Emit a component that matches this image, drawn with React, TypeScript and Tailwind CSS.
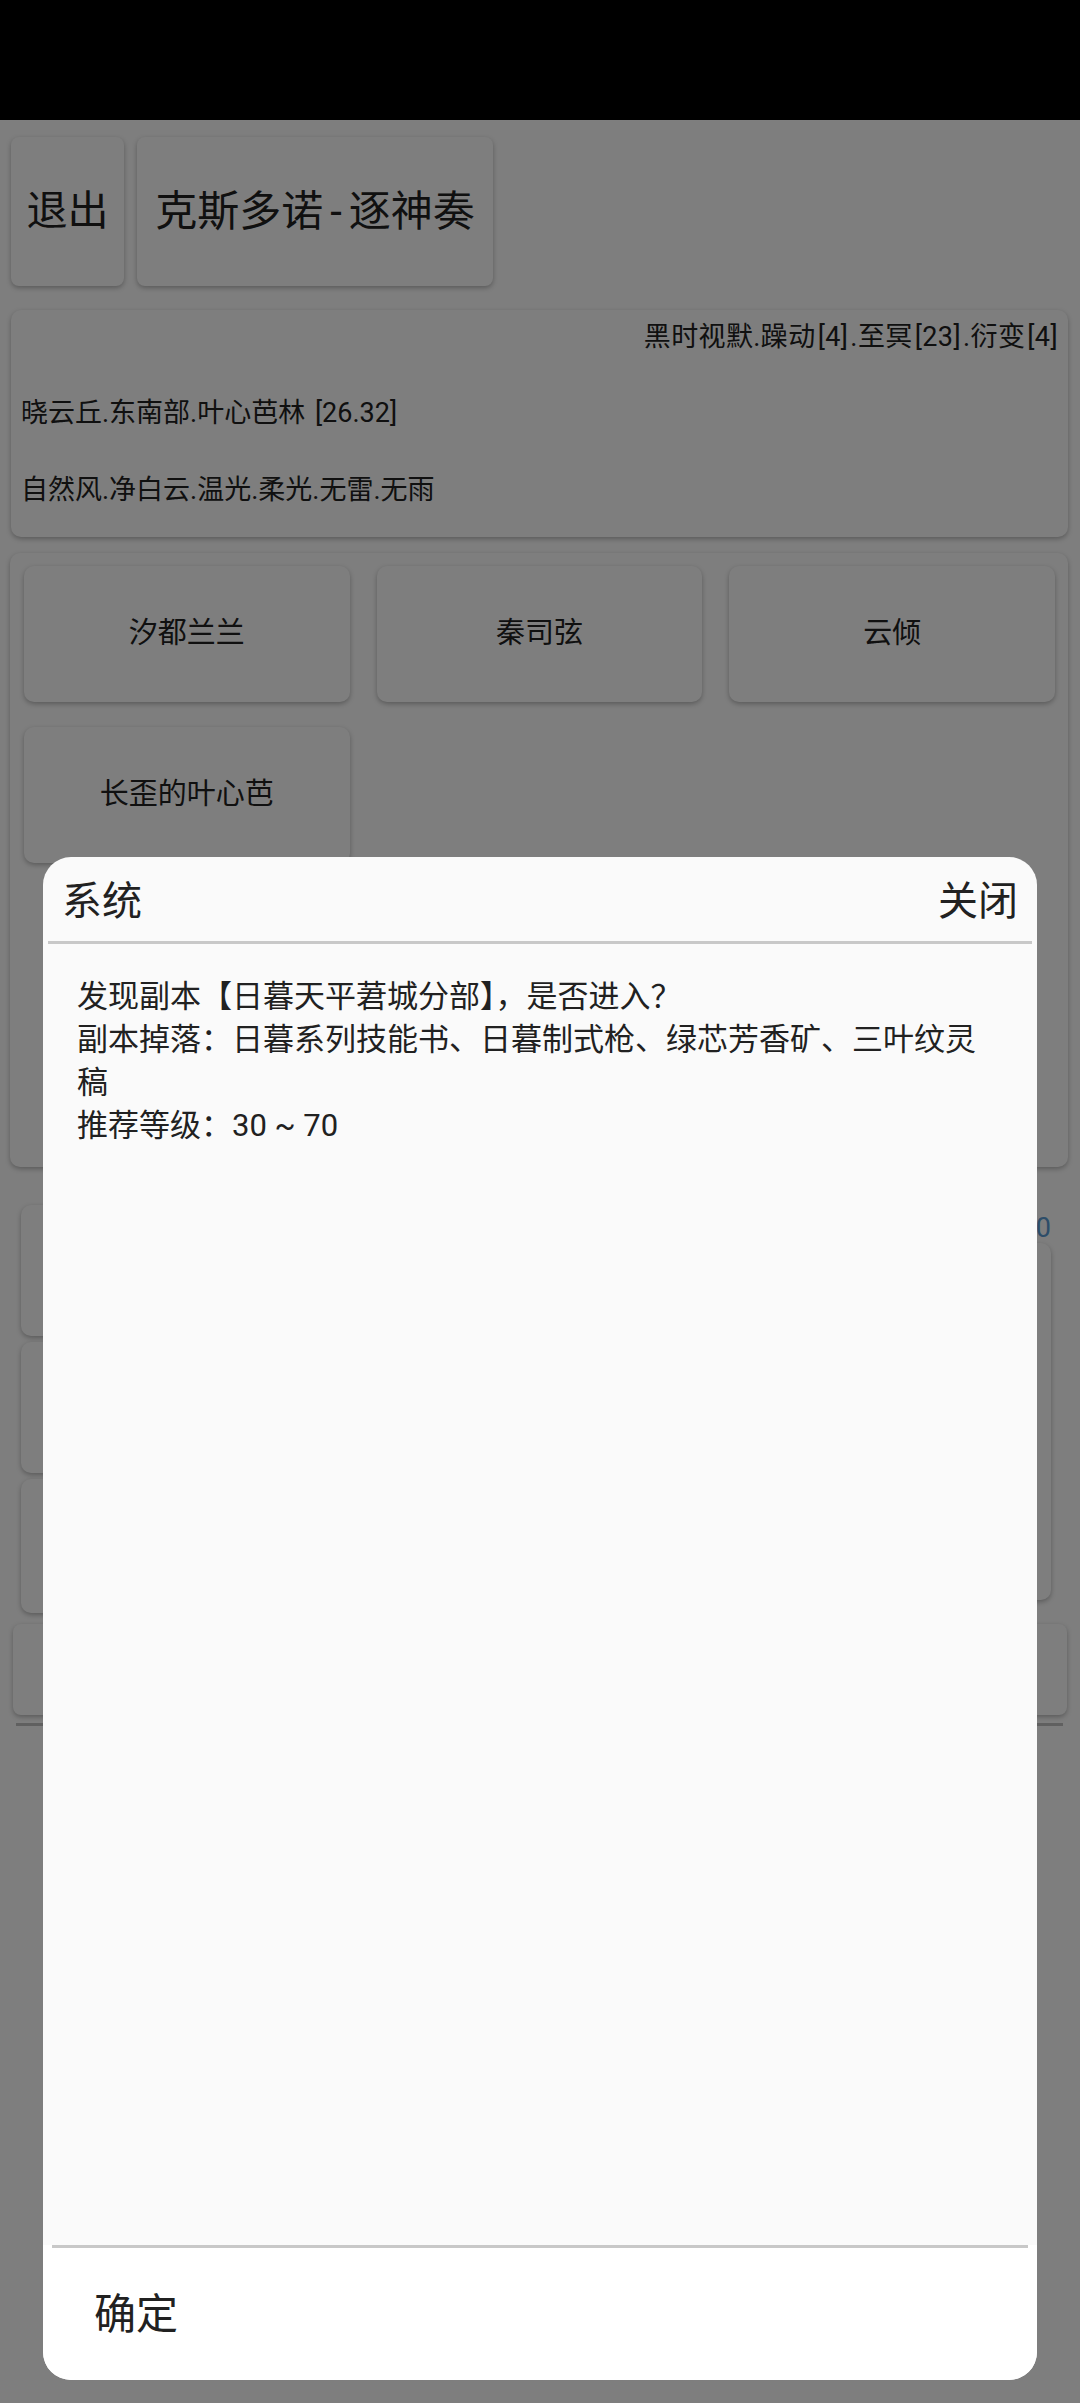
export default function App() {
  const card = "bg-[#fcfcfc] shadow-[0_2px_5px_rgba(0,0,0,0.28)]";
  return (
    <div className="relative w-[1080px] h-[2403px] overflow-hidden bg-[#fcfcfc] text-[#212121] font-[Roboto,'Noto_Sans_CJK_SC',sans-serif]">
      <div className="h-[120px] bg-black" />
      <div className="flex gap-[13px] pl-[11px] pt-[17px]">
        <div className={`w-[113px] h-[149px] rounded-[8px] ${card} flex items-center justify-center text-[41px]`}>退出</div>
        <div className={`w-[356px] h-[149px] rounded-[8px] ${card} flex items-center justify-center text-[42px]`}>
          克斯多诺<span className="mx-[7px]">-</span>逐神奏
        </div>
      </div>
      <div className={`ml-[11px] mr-[12px] mt-[24px] h-[227px] rounded-[10px] ${card} flex flex-col px-[10px] pt-[4px] text-[27px]`}>
        <div className="h-[46px] leading-[46px] text-right whitespace-nowrap tracking-[0.4px]">
          黑时视默.躁动<span className="mx-[2px]">[4]</span>.至冥<span className="mx-[2px]">[23]</span>.衍变<span className="ml-[2px]">[4]</span>
        </div>
        <div className="mt-[30px] h-[46px] leading-[46px] whitespace-nowrap">
          晓云丘.东南部.叶心芭林 <span className="ml-[3px]">[26.32]</span>
        </div>
        <div className="mt-[31px] h-[46px] leading-[46px] whitespace-nowrap">自然风.净白云.温光.柔光.无雷.无雨</div>
      </div>
      <div className={`ml-[10px] mr-[12px] mt-[16px] h-[614px] rounded-[10px] ${card} pt-[13px] pl-[14px] pr-[13px]`}>
        <div className="grid grid-cols-3 gap-x-[27px] gap-y-[25px]">
          {["汐都兰兰", "秦司弦", "云倾", "长歪的叶心芭"].map((t) => (
            <div key={t} className={`h-[136px] rounded-[10px] ${card} flex items-center justify-center text-[29px]`}>{t}</div>
          ))}
        </div>
      </div>
      <div className="mt-[23px] h-[425px] flex">
        <div className="w-[520px] pl-[21px] pt-[15px] flex flex-col gap-[6px]">
          <div className={`h-[131px] rounded-[10px] ${card}`} />
          <div className={`h-[131px] rounded-[10px] ${card}`} />
          <div className={`h-[134px] rounded-[10px] ${card}`} />
        </div>
        <div className="flex-1 pl-[20px] pr-[29px] flex flex-col items-end">
          <div className="h-[53px] flex items-end leading-[30px] text-[27px] text-[#5a9ad2]">0</div>
          <div className={`w-full h-[357px] rounded-[10px] ${card}`} />
        </div>
      </div>
      <div className={`ml-[13px] mr-[13px] mt-[9px] h-[91px] rounded-[8px] ${card}`} />
      <div className="ml-[16px] mr-[17px] mt-[8px] h-[3px] bg-[#c0c0c0]" />

      <div className="absolute inset-0 bg-black/50" />

      <div className="absolute left-[43px] top-[857px] w-[994px] h-[1523px] rounded-[28px] overflow-hidden flex flex-col bg-[#fafafa]">
        <div className="h-[84px] shrink-0 flex items-center justify-between pl-[19px] pr-[19px] pt-[6px] text-[40px]">
          <span>系统</span>
          <span>关闭</span>
        </div>
        <div className="mx-[5px] h-[3px] shrink-0 bg-[#c8c8c8]" />
        <div className="flex-1 px-[34px] pt-[31px] text-[31px] leading-[43px]">
          <div>发现副本【日暮天平莙城分部】，是否进入？</div>
          <div>副本掉落：日暮系列技能书、日暮制式枪、绿芯芳香矿、三叶纹灵稿</div>
          <div>推荐等级：30 ~ 70</div>
        </div>
        <div className="h-[135px] shrink-0 bg-white flex flex-col">
          <div className="mx-[9px] h-[3px] bg-[#c8c8c8]" />
          <div className="flex-1 flex items-center pl-[51px] text-[42px]">确定</div>
        </div>
      </div>
    </div>
  );
}
